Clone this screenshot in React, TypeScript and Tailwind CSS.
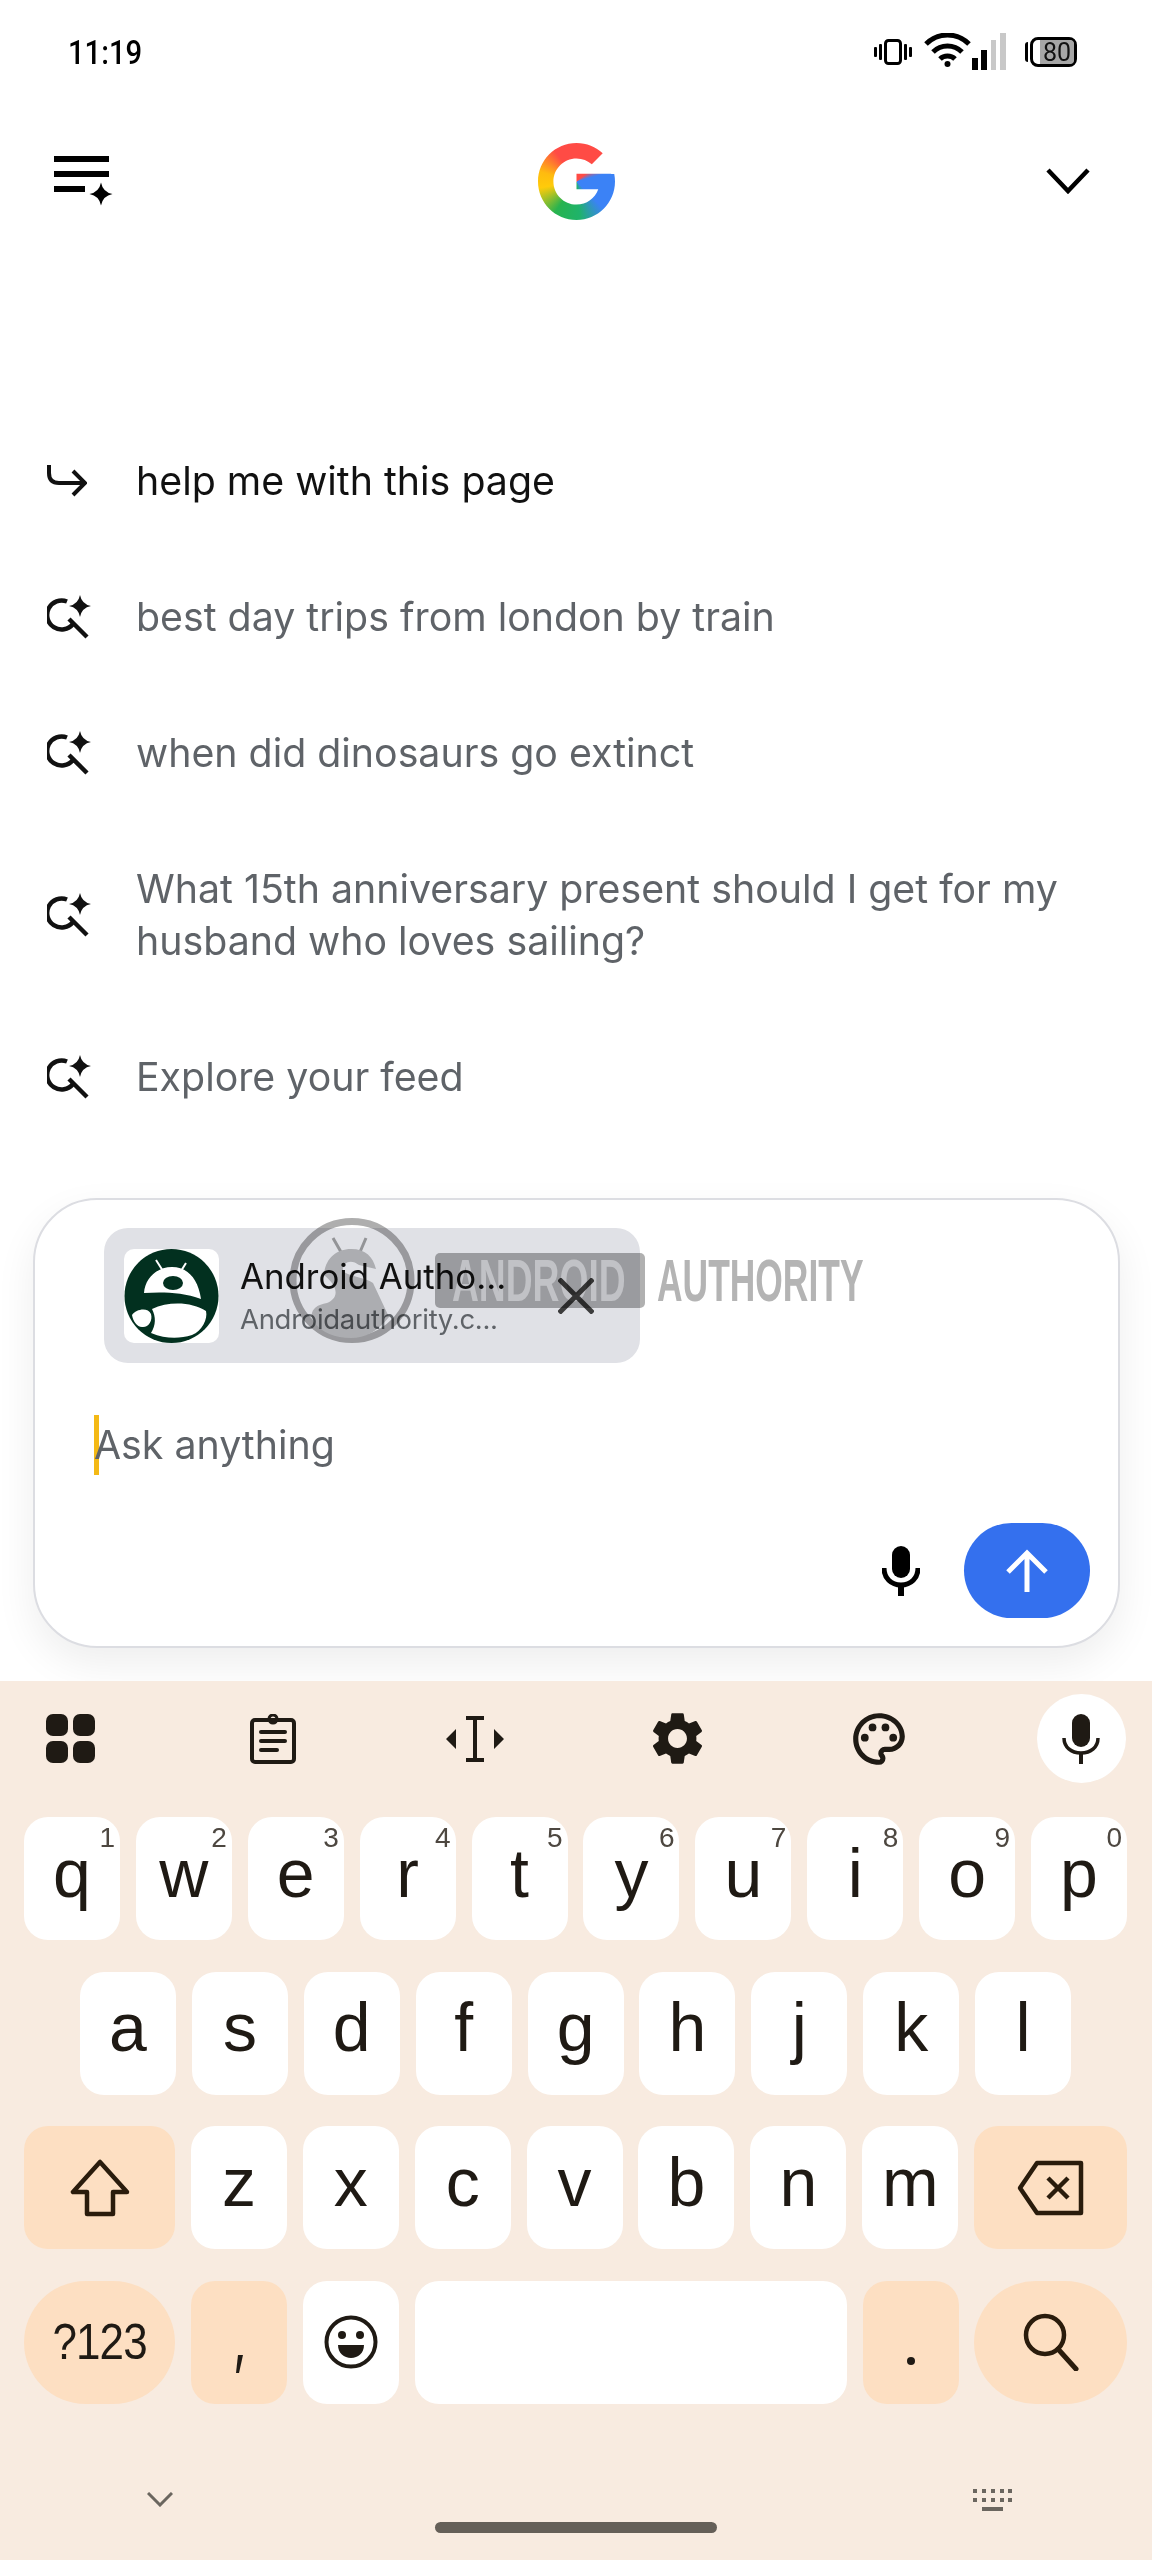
import { MdOutlinePalette, MdSettings } from 'react-icons/md';

const sans = "font-['Inter',sans-serif]";

function Spark({ x, y, r }: { x: number; y: number; r: number }) {
  const c = r * 0.16;
  return (
    <path
      d={`M${x} ${y - r}Q${x + c} ${y - c} ${x + r} ${y}Q${x + c} ${y + c} ${x} ${y + r}Q${x - c} ${y + c} ${x - r} ${y}Q${x - c} ${y - c} ${x} ${y - r}Z`}
      fill="currentColor"
    />
  );
}

function SearchSpark() {
  return (
    <svg width="44" height="44" viewBox="0 0 44 44" className="text-[#111]">
      <path d="M21 6.5A14.5 14.5 0 1 0 27 29" transform="translate(-1 0)" fill="none" stroke="currentColor" strokeWidth="4.5" />
      <path d="M22 24l18 18" fill="none" stroke="currentColor" strokeWidth="4.5" />
      <Spark x={33} y={11} r={11} />
    </svg>
  );
}

function StatusIcons() {
  return (
    <div className="flex items-center">
      <svg width="38" height="26" viewBox="0 0 38 26" className="mr-[12px]">
        <rect x="11.5" y="1.5" width="15" height="23" rx="3" fill="none" stroke="#000" strokeWidth="3" />
        <rect x="0" y="8" width="3" height="10" rx="1" />
        <rect x="5" y="5" width="3" height="16" rx="1" />
        <rect x="30" y="5" width="3" height="16" rx="1" />
        <rect x="35" y="8" width="3" height="10" rx="1" />
      </svg>
      <svg width="84" height="38" viewBox="0 0 84 38">
        <path d="M2 11C14 -1 33 -1 45 11" fill="none" stroke="#000" strokeWidth="5" />
        <path d="M9 19C17 11 30 11 38 19" fill="none" stroke="#000" strokeWidth="5" />
        <path d="M16 26C20 22 27 22 31 26" fill="none" stroke="#000" strokeWidth="5" />
        <circle cx="23.5" cy="31" r="3" />
        <rect x="48" y="25" width="6" height="12" />
        <rect x="57" y="17" width="6" height="20" />
        <rect x="67" y="7" width="5" height="30" fill="#c8c8c8" />
        <rect x="76" y="0" width="6" height="37" fill="#c8c8c8" />
      </svg>
      <div className="ml-[17px] flex items-center">
        <div className="mr-[2px] h-[20px] w-[3px] rounded-l-sm bg-black" />
        <div className="flex h-[30px] w-[47px] justify-end rounded-[8px] border-[3px] border-black bg-white">
          <div className="flex w-[34px] items-center justify-center rounded-r-[4px] bg-[#a6a6a6] font-['Roboto',sans-serif] text-[25px] leading-none text-[#111]">80</div>
        </div>
      </div>
    </div>
  );
}

function GoogleG() {
  return (
    <svg width="77" height="77" viewBox="4 4 40 40">
      <defs>
        <clipPath id="g-shape">
          <path d="M43.611 20.083H42V20H24v8h11.303c-1.649 4.657-6.08 8-11.303 8-6.627 0-12-5.373-12-12s5.373-12 12-12c3.059 0 5.842 1.154 7.961 3.039l5.657-5.657C34.046 6.053 29.268 4 24 4 12.955 4 4 12.955 4 24s8.955 20 20 20 20-8.955 20-20c0-1.341-.138-2.65-.389-3.917z" />
        </clipPath>
      </defs>
      <foreignObject x="4" y="4" width="40" height="40" clipPath="url(#g-shape)">
        <div className="h-[40px] w-[40px] bg-[conic-gradient(#ff4b45_0deg,#ff4b45_50deg,#3b82f6_75deg,#3b82f6_135deg,#1fb36a_175deg,#28b34f_215deg,#ffcb0a_260deg,#ffbb0f_285deg,#ff4b45_325deg,#ff4b45_360deg)]" />
      </foreignObject>
    </svg>
  );
}

function Suggestion({ muted = true, icon, children }: { muted?: boolean; icon: React.ReactNode; children: React.ReactNode }) {
  return (
    <div className={`flex items-center py-[42px] pl-[47px] pr-[40px] text-[39.3px] leading-[52px] ${sans} ${muted ? 'text-[#5f6368]' : 'text-[#111]'}`}>
      <div className="flex w-[89px] shrink-0 items-center">{icon}</div>
      <div>{children}</div>
    </div>
  );
}

function Favicon() {
  return (
    <div className="h-[94px] w-[95px] shrink-0 rounded-[10px] bg-white">
      <svg width="95" height="94" viewBox="0 0 95 94">
        <circle cx="47.5" cy="47" r="47" fill="#02301f" />
        <path d="M32 11l7 11M62 14l-5 8" stroke="#fff" strokeWidth="2" />
        <path d="M20 44C21 29 33 18 48 18S74 29 77 50C58 43 38 43 20 44Z" fill="#fff" />
        <ellipse cx="49" cy="34" rx="10" ry="7" fill="#02301f" />
        <path d="M28 60C45 52 68 53 82 62C84 70 78 82 68 86C55 90 42 90 27 84C32 76 32 68 28 60Z" fill="#fff" />
        <path d="M8 66C12 60 24 58 27 65C29 72 24 79 18 78C13 78 9 72 8 66Z" fill="#fff" />
      </svg>
    </div>
  );
}

function Watermark() {
  return (
    <div className="pointer-events-none absolute left-[289px] top-[1217px] z-20 h-[127px] w-[580px] mix-blend-multiply">
      <svg width="126" height="127" viewBox="0 0 126 127" className="absolute left-0 top-0">
        <circle cx="63" cy="63.5" r="59" fill="none" stroke="#aeaeae" strokeWidth="7" />
        <path d="M44 21l8 14M77 21l-6 14" stroke="#a8a8a8" strokeWidth="3" />
        <path d="M35 58C36 42 47 32 62 32S84 40 87 52L70 48C63 42 53 44 54 54C60 60 76 60 84 66L100 100C88 115 76 121 62 121C46 121 33 116 24 104C20 94 26 88 38 86C48 82 52 72 35 58Z" fill="#c4c4c4" />
      </svg>
      <div className="absolute left-[146px] top-[36px] h-[55px] w-[210px] rounded-[5px] bg-[#b0b0b0]" />
      <div className="absolute left-[163px] top-[41px] origin-left scale-x-[0.62] font-['Liberation_Sans',sans-serif] text-[60px] font-bold leading-[46px] text-[#dcdcdc]">ANDROID</div>
      <div className="absolute left-[368px] top-[41px] origin-left scale-x-[0.59] font-['Liberation_Sans',sans-serif] text-[60px] font-bold leading-[46px] text-[#b4b4b4]">AUTHORITY</div>
    </div>
  );
}

function Key({ label, hint, className = 'w-[96px] bg-white', children }: { label?: string; hint?: string; className?: string; children?: React.ReactNode }) {
  return (
    <div className={`relative flex h-[123px] shrink-0 items-center justify-center rounded-[24px] font-['Liberation_Sans',sans-serif] leading-none text-[#1f1a14] ${className}`}>
      {hint && <span className="absolute right-[5px] top-[6px] text-[28px] leading-[30px] text-[#4d4740]">{hint}</span>}
      {label && <span className="relative -top-[6px] text-[68px]">{label}</span>}
      {children}
    </div>
  );
}

export default function App() {
  const row1 = 'qwertyuiop'.split('');
  const hints = '1234567890'.split('');
  const mod = 'bg-[#fddfc2]';

  return (
    <div className="relative flex h-[2560px] w-[1152px] flex-col overflow-hidden bg-white">
      {/* status bar */}
      <div className="flex h-[104px] shrink-0 items-center justify-between pl-[68px] pr-[75px]">
        <span className="origin-left scale-x-[0.86] font-['Roboto',sans-serif] text-[34px] font-medium text-black">11:19</span>
        <StatusIcons />
      </div>

      {/* header */}
      <div className="flex h-[154px] shrink-0 items-center justify-between pl-[54px] pr-[62px]">
        <svg width="60" height="50" viewBox="0 0 60 50">
          <path d="M0 3h55M0 18h55M0 33h31" stroke="#000" strokeWidth="6" />
          <Spark x={47} y={38} r={11.5} />
        </svg>
        <GoogleG />
        <svg width="44" height="26" viewBox="0 0 44 26" className="ml-[7px]">
          <path d="M2 2l20 21L42 2" fill="none" stroke="#000" strokeWidth="4.5" />
        </svg>
      </div>

      {/* suggestions */}
      <div className="mt-[155px] shrink-0">
        <Suggestion
          muted={false}
          icon={
            <svg width="40" height="32" viewBox="0 0 40 32">
              <path d="M2 0v8c0 6 3 10 10 10h24M26 6l12 12-12 12" fill="none" stroke="#111" strokeWidth="4" />
            </svg>
          }
        >
          help me with this page
        </Suggestion>
        <Suggestion icon={<SearchSpark />}>best day trips from london by train</Suggestion>
        <Suggestion icon={<SearchSpark />}>when did dinosaurs go extinct</Suggestion>
        <Suggestion icon={<SearchSpark />}>
          What 15th anniversary present should I get for my
          <br />
          husband who loves sailing?
        </Suggestion>
        <Suggestion icon={<SearchSpark />}>Explore your feed</Suggestion>
      </div>

      {/* input card */}
      <div className={`relative z-0 ml-[33px] mt-[53px] flex h-[450px] w-[1087px] shrink-0 flex-col rounded-[64px] border-2 border-[#dcdde2] bg-white pb-[28px] pl-[59px] pr-[28px] pt-[28px] shadow-[0_16px_40px_rgba(0,0,0,0.07)] ${sans}`}>
        <div className="ml-[10px] flex h-[135px] w-[536px] items-center rounded-[24px] bg-[#e0e1e6] pl-[20px]">
          <Favicon />
          <div className="ml-[21px] flex w-[280px] shrink-0 flex-col">
            <span className="whitespace-nowrap text-[34.8px] leading-[46px] text-[#111]">Android Autho...</span>
            <span className="whitespace-nowrap text-[27.5px] leading-[40px] tracking-[-0.3px] text-[#5f6368]">Androidauthority.c...</span>
          </div>
          <svg width="36" height="36" viewBox="0 0 36 36" className="ml-[38px] shrink-0">
            <path d="M1 1l34 34M35 1L1 35" stroke="#3c3c3c" strokeWidth="5" />
          </svg>
        </div>
        <div className="mt-[52px] flex h-[60px] items-center">
          <div className="h-[60px] w-[5px] shrink-0 bg-[#f4b915]" />
          <span className="-ml-[5px] text-[39.3px] leading-[52px] text-[#5f6368]">Ask anything</span>
        </div>
        <div className="mt-auto flex items-center justify-end">
          <svg width="38" height="50" viewBox="0 0 38 50" className="mr-[44px]">
            <rect x="10" y="0" width="18" height="32" rx="9" />
            <path d="M2 22c0 10 7 17 17 17s17-7 17-17" fill="none" stroke="#000" strokeWidth="5" />
            <rect x="16" y="38" width="6" height="12" />
          </svg>
          <div className="flex h-[95px] w-[126px] items-center justify-center rounded-full bg-[#3470ee]">
            <svg width="44" height="44" viewBox="0 0 44 44">
              <path d="M22 43V4M3 23L22 4l19 19" fill="none" stroke="#fff" strokeWidth="5" />
            </svg>
          </div>
        </div>
      </div>

      {/* keyboard */}
      <div className="relative z-10 mt-[33px] flex-1 bg-[#f8ebe0]">
        <div className="flex h-[136px] justify-between pl-[26px] pr-[26px] pt-[13px] text-[#1f1a14]">
          <div className="flex h-[89px] w-[89px] items-center justify-center">
            <div className="grid grid-cols-2 gap-[5px]">
              <div className="h-[22px] w-[22px] rounded-[7px] bg-[#1f1a14]" />
              <div className="h-[22px] w-[22px] rounded-[7px] bg-[#1f1a14]" />
              <div className="h-[22px] w-[22px] rounded-[7px] bg-[#1f1a14]" />
              <div className="h-[22px] w-[22px] rounded-[7px] bg-[#1f1a14]" />
            </div>
          </div>
          <div className="flex h-[89px] w-[89px] items-center justify-center">
            <svg width="46" height="50" viewBox="0 0 46 50">
              <rect x="2" y="6" width="42" height="42" rx="3" fill="none" stroke="currentColor" strokeWidth="4" />
              <circle cx="23" cy="5" r="4" fill="none" stroke="currentColor" strokeWidth="3" />
              <path d="M11 18h24M11 27h24M11 36h16" stroke="currentColor" strokeWidth="4" strokeLinecap="round" />
            </svg>
          </div>
          <div className="flex h-[89px] w-[89px] items-center justify-center">
            <svg width="58" height="46" viewBox="0 0 58 46" fill="currentColor">
              <path d="M20 2h18M20 44h18M29 2v42" stroke="currentColor" strokeWidth="4" fill="none" />
              <path d="M10 13v20L0 23zM48 13v20l10-10z" />
            </svg>
          </div>
          <div className="flex h-[89px] w-[89px] items-center justify-center">
            <MdSettings size={63} />
          </div>
          <div className="flex h-[89px] w-[89px] items-center justify-center">
            <MdOutlinePalette size={62} />
          </div>
          <div className="flex h-[89px] w-[89px] items-center justify-center rounded-full bg-white">
            <svg width="38" height="50" viewBox="0 0 38 50" fill="currentColor">
              <rect x="10" y="0" width="18" height="33" rx="9" />
              <path d="M2 24c0 9 7 15 17 15s17-6 17-15" fill="none" stroke="currentColor" strokeWidth="3.5" />
              <rect x="17" y="38" width="4" height="12" />
            </svg>
          </div>
        </div>

        <div className="flex flex-col gap-[31.5px]">
          <div className="flex gap-[15.9px] pl-[24px]">
            {row1.map((k, i) => (
              <Key key={k} label={k} hint={hints[i]} />
            ))}
          </div>
          <div className="flex gap-[15.9px] pl-[80px]">
            {'asdfghjkl'.split('').map((k) => (
              <Key key={k} label={k} />
            ))}
          </div>
          <div className="flex gap-[15.9px] pl-[24px]">
            <Key className={`w-[151px] ${mod}`}>
              <svg width="60" height="58" viewBox="0 0 60 58">
                <path d="M30 3L3 33h14v22h26V33h14z" fill="none" stroke="#2a1c0c" strokeWidth="4.5" strokeLinejoin="round" />
              </svg>
            </Key>
            {'zxcvbnm'.split('').map((k) => (
              <Key key={k} label={k} />
            ))}
            <Key className={`w-[153px] ${mod}`}>
              <svg width="68" height="56" viewBox="0 0 68 56">
                <path d="M20 3h44v50H20L3 28z" fill="none" stroke="#2a1c0c" strokeWidth="4.5" strokeLinejoin="round" />
                <path d="M31 18l20 20M51 18L31 38" stroke="#2a1c0c" strokeWidth="4.5" />
              </svg>
            </Key>
          </div>
          <div className="flex gap-[15.9px] pl-[24px]">
            <Key className={`w-[151px] rounded-full ${mod}`}>
              <span className="scale-x-[0.88] whitespace-nowrap text-[50px] tracking-[-1px]">?123</span>
            </Key>
            <Key className={`w-[96px] ${mod}`}>
              <svg width="8" height="18" viewBox="0 0 8 18" className="relative top-[22px]">
                <path d="M3 0h5L4 18H1z" fill="#1f1a14" />
              </svg>
            </Key>
            <Key>
              <svg width="54" height="54" viewBox="0 0 54 54">
                <circle cx="27" cy="27" r="24.5" fill="none" stroke="#1f1a14" strokeWidth="4" />
                <circle cx="18" cy="20" r="4" fill="#1f1a14" />
                <circle cx="36" cy="20" r="4" fill="#1f1a14" />
                <path d="M14 30h26c0 8-6 13-13 13s-13-5-13-13z" fill="#1f1a14" />
              </svg>
            </Key>
            <Key className="w-[432px] bg-white" />
            <Key className={`w-[96px] ${mod}`}>
              <div className="relative top-[19px] h-[8px] w-[8px] rounded-full bg-[#1f1a14]" />
            </Key>
            <Key className={`w-[153px] rounded-full ${mod}`}>
              <svg width="58" height="58" viewBox="0 0 58 58">
                <circle cx="23" cy="22" r="19" fill="none" stroke="#2a1c0c" strokeWidth="4.5" />
                <path d="M36 36l18 20" stroke="#2a1c0c" strokeWidth="5" strokeLinecap="round" />
              </svg>
            </Key>
          </div>
        </div>

        {/* nav */}
        <div className="mt-[84px] flex h-[24px] items-center justify-between pl-[147px] pr-[140px]">
          <svg width="26" height="15" viewBox="0 0 26 15">
            <path d="M1 1l12 12L25 1" fill="none" stroke="#6b665f" strokeWidth="3" />
          </svg>
          <svg width="39" height="22" viewBox="0 0 39 22" fill="#6b665f">
            <path d="M0 0h4v4H0zM9 0h4v4H9zM18 0h4v4h-4zM27 0h4v4h-4zM35 0h4v4h-4zM0 9h4v4H0zM9 9h4v4H9zM18 9h4v4h-4zM27 9h4v4h-4zM35 9h4v4h-4zM9 18h21v4H9z" />
          </svg>
        </div>
        <div className="mx-auto mt-[10px] h-[11px] w-[282px] rounded-full bg-[#655f58]" />
      </div>

      <Watermark />
    </div>
  );
}
